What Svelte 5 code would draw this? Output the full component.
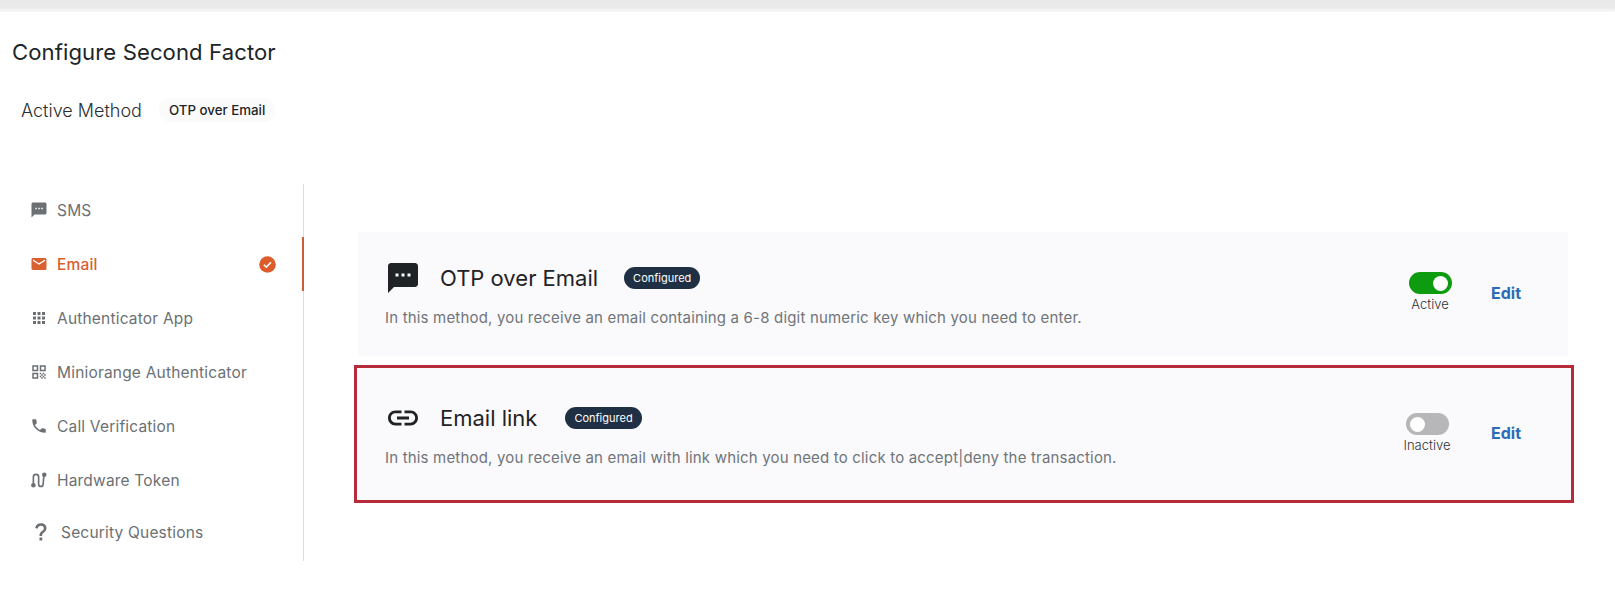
<script>
  const navItems = [
    { label: 'SMS', icon: 'sms' },
    { label: 'Email', icon: 'mail', active: true },
    { label: 'Authenticator App', icon: 'apps' },
    { label: 'Miniorange Authenticator', icon: 'qr' },
    { label: 'Call Verification', icon: 'call' },
    { label: 'Hardware Token', icon: 'token' },
    { label: 'Security Questions', icon: 'help' }
  ];

  const methods = [
    {
      name: 'OTP over Email',
      icon: 'sms',
      desc: 'In this method, you receive an email containing a 6-8 digit numeric key which you need to enter.',
      on: true
    },
    {
      name: 'Email link',
      icon: 'link',
      desc: 'In this method, you receive an email with link which you need to click to accept|deny the transaction.',
      on: false,
      highlighted: true
    }
  ];

  const paths = {
    sms: 'M20 2H4c-1.1 0-2 .9-2 2v18l4-4h14c1.1 0 2-.9 2-2V4c0-1.1-.9-2-2-2zM9 11H7V9h2v2zm4 0h-2V9h2v2zm4 0h-2V9h2v2z',
    mail: 'M20 4H4c-1.1 0-2 .9-2 2v12c0 1.1.9 2 2 2h16c1.1 0 2-.9 2-2V6c0-1.1-.9-2-2-2zm0 4l-8 5-8-5V6l8 5 8-5v2z',
    apps: 'M4 4h4v4H4zM10 4h4v4h-4zM16 4h4v4h-4zM4 10h4v4H4zM10 10h4v4h-4zM16 10h4v4h-4zM4 16h4v4H4zM10 16h4v4h-4zM16 16h4v4h-4z',
    qr: 'M3 11h8V3H3v8zm2-6h4v4H5V5zM3 21h8v-8H3v8zm2-6h4v4H5v-4zM13 3v8h8V3h-8zm6 6h-4V5h4v4zM13 13h2v2h-2zM15 15h2v2h-2zM13 17h2v2h-2zM17 13h2v2h-2zM19 15h2v2h-2zM17 17h2v2h-2zM15 19h2v2h-2zM19 19h2v2h-2z',
    call: 'M6.62 10.79c1.44 2.83 3.76 5.14 6.59 6.59l2.2-2.2c.27-.27.67-.36 1.02-.24 1.12.37 2.33.57 3.57.57.55 0 1 .45 1 1V20c0 .55-.45 1-1 1C10.61 21 3 13.39 3 4c0-.55.45-1 1-1h3.5c.55 0 1 .45 1 1 0 1.25.2 2.45.57 3.57.11.35.03.74-.25 1.02l-2.2 2.2z',
    help: 'M12 1.5c-3.8 0-6.6 2.1-7 5.9l3.2.4c.3-2.4 1.7-3.4 3.8-3.4 2 0 3.4 1.1 3.4 3 0 1.4-.7 2.3-2.3 3.5-2 1.5-2.9 2.9-2.9 5.2v.6h3.1v-.5c0-1.4.6-2.2 2.3-3.5 1.9-1.5 3-2.9 3-5.4 0-3.4-2.7-5.8-6.6-5.8zM10.2 18.7h3.3v3.5h-3.3z',
    link: 'M3.9 12c0-1.71 1.39-3.1 3.1-3.1h4V7H7c-2.76 0-5 2.24-5 5s2.24 5 5 5h4v-1.9H7c-1.71 0-3.1-1.39-3.1-3.1zM8 13h8v-2H8v2zm9-6h-4v1.9h4c1.71 0 3.1 1.39 3.1 3.1s-1.39 3.1-3.1 3.1h-4V17h4c2.76 0 5-2.24 5-5s-2.24-5-5-5z'
  };
</script>

<div class="topbar"></div>

<header class="page-head">
  <h1>Configure Second Factor</h1>
  <div class="active-row">
    <span class="active-label">Active Method</span>
    <span class="active-chip">OTP over Email</span>
  </div>
</header>

<main class="layout">
  <nav class="sidebar">
    {#each navItems as item}
      <div class="nav-item" class:active={item.active} class:help={item.icon === 'help'}>
        {#if item.icon === 'token'}
          <svg class="nav-icon" viewBox="0 0 24 24" fill="none" stroke="currentColor" stroke-width="2.2">
            <path d="M4.5 17V8a3.5 3.5 0 0 1 7 0v9.5a3 3 0 0 0 6 0L18.5 6" />
            <circle cx="4.5" cy="19" r="3" fill="currentColor" stroke="none" />
            <circle cx="19" cy="5" r="3" fill="currentColor" stroke="none" />
          </svg>
        {:else}
          <svg class="nav-icon" viewBox="0 0 24 24" fill="currentColor"><path d={paths[item.icon]} /></svg>
        {/if}
        <span class="nav-label">{item.label}</span>
        {#if item.active}
          <svg class="nav-check" viewBox="0 0 16 16">
            <circle cx="8" cy="8" r="7.8" fill="#dd5c2c" />
            <path d="M4.6 8.2l2.3 2.3 4.4-4.6" fill="none" stroke="#fff" stroke-width="1.5" />
          </svg>
        {/if}
      </div>
    {/each}
  </nav>

  <section class="methods">
    {#each methods as m}
      <article class="card" class:highlighted={m.highlighted}>
        <div class="card-main">
          <div class="card-title">
            <svg class="card-icon" viewBox="2 2 20 20" fill="#1f2326"><path d={paths[m.icon]} /></svg>
            <h2>{m.name}</h2>
            <span class="configured">Configured</span>
          </div>
          <p>{m.desc}</p>
        </div>
        <div class="status" class:off={!m.on}>
          <span class="toggle"><span class="knob"></span></span>
          <span class="status-label">{m.on ? 'Active' : 'Inactive'}</span>
        </div>
        <span class="edit">Edit</span>
      </article>
    {/each}
  </section>
</main>

<style>
  :global(body) {
    margin: 0;
    background: #fff;
    font-family: Inter, "Liberation Sans", sans-serif;
    color: #1f2326;
    overflow: hidden;
  }

  .topbar {
    height: 12px;
    background: linear-gradient(#e9e9e9 0, #ebebeb 60%, #f7f7f7 100%);
  }

  .page-head {
    padding: 25px 0 0 12px;
    height: 172px;
    box-sizing: border-box;
  }

  h1 {
    margin: 0;
    font-size: 22.1px;
    line-height: 30px;
    font-weight: 400;
    letter-spacing: 0.1px;
    color: #202427;
  }

  .active-row {
    display: flex;
    align-items: center;
    gap: 17px;
    margin-top: 31px;
    padding-left: 9px;
  }

  .active-label {
    font-size: 18px;
    font-weight: 300;
    color: #2a2e31;
  }

  .active-chip {
    padding: 4px 10px;
    border-radius: 10px;
    background: #fbfbfb;
    font-size: 13.3px;
    font-weight: 500;
    line-height: 16px;
  }

  .layout {
    display: flex;
    align-items: flex-start;
  }

  .sidebar {
    width: 304px;
    height: 377px;
    box-sizing: border-box;
    border-right: 1px solid #dedede;
    flex: none;
  }

  .nav-item {
    display: flex;
    align-items: center;
    height: 54px;
    padding-left: 30px;
    padding-right: 27px;
    color: #6c7073;
    font-size: 15.5px;
    letter-spacing: 0.19px;
    box-sizing: border-box;
    margin-right: -1px;
  }

  .nav-item:first-child {
    margin-top: -1px;
  }

  .nav-item.active {
    color: #d9602f;
    border-right: 2px solid #c8603c;
    font-weight: 500;
    padding-right: 25px;
  }

  .nav-item.help {
    height: 50px;
    padding-left: 31px;
  }

  .nav-icon {
    width: 18px;
    height: 18px;
    flex: none;
    margin-right: 9px;
  }

  .nav-item.help .nav-icon {
    width: 20px;
    height: 22px;
    margin-right: 10px;
  }

  .nav-label {
    flex: 1;
    white-space: nowrap;
  }

  .nav-check {
    width: 17px;
    height: 17px;
    flex: none;
    margin-right: 1px;
  }

  .methods {
    flex: 1;
    display: flex;
    flex-direction: column;
    gap: 9px;
    padding: 48px 41px 0 50px;
    min-width: 0;
  }

  .card {
    display: flex;
    align-items: center;
    height: 124px;
    margin: 0 6px 0 4px;
    box-sizing: border-box;
    padding: 0 47px 0 27px;
    background: #faf9fb;
  }

  .card.highlighted {
    height: 138px;
    margin: 0;
    border: 3px solid #b52b3a;
    padding: 0 49px 0 28px;
  }

  .card-main {
    flex: 1;
    min-width: 0;
    padding-top: 3px;
  }

  .card-title {
    display: flex;
    align-items: center;
    height: 30px;
    margin-bottom: 15px;
    padding-left: 3px;
  }

  .card-icon {
    width: 30px;
    height: 30px;
    flex: none;
    margin-right: 22px;
  }

  h2 {
    margin: 0 26px 0 0;
    font-size: 22px;
    font-weight: 400;
    color: #1f2326;
  }

  .highlighted h2 {
    margin-right: 28px;
  }

  .configured {
    background: #1f3044;
    color: #fff;
    font-size: 11px;
    line-height: 22px;
    padding: 0 9px;
    border-radius: 11px;
  }

  p {
    margin: 0;
    font-size: 15px;
    letter-spacing: 0.18px;
    line-height: 20px;
    color: #70757a;
  }

  .status {
    display: flex;
    flex-direction: column;
    align-items: center;
    width: 50px;
    margin-right: 36px;
    margin-top: -4px;
  }

  .status.off {
    margin-right: 39px;
    margin-top: -2px;
  }

  .toggle {
    display: flex;
    justify-content: flex-end;
    align-items: center;
    width: 43px;
    height: 22px;
    padding: 0 4px;
    box-sizing: border-box;
    border-radius: 11px;
    background: #0d9c0f;
  }

  .off .toggle {
    justify-content: flex-start;
    background: #b7b7b9;
  }

  .knob {
    width: 15px;
    height: 15px;
    border-radius: 50%;
    background: #fff;
  }

  .status-label {
    font-size: 13px;
    font-weight: 300;
    line-height: 16px;
    margin-top: 2px;
    color: #2f3336;
    white-space: nowrap;
  }

  .edit {
    color: #2b6cb8;
    font-size: 16px;
    font-weight: 700;
    margin-top: -3px;
  }

  .highlighted .edit {
    margin-right: 1px;
  }
</style>
